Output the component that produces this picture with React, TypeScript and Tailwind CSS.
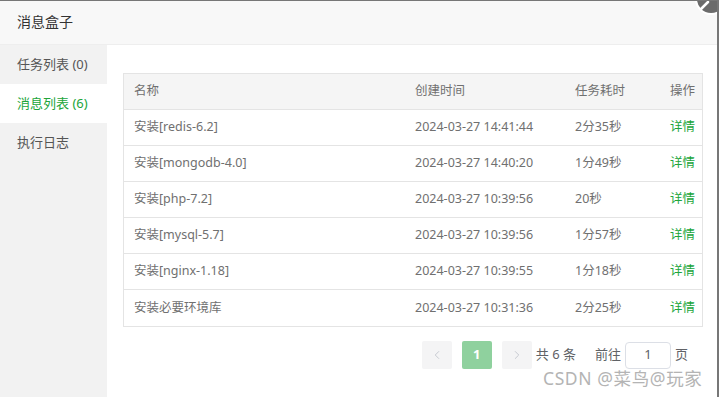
import { ChevronLeft, ChevronRight } from 'lucide-react';

const rows = [
    { name: '安装[redis-6.2]', time: '2024-03-27 14:41:44', cost: '2分35秒' },
    { name: '安装[mongodb-4.0]', time: '2024-03-27 14:40:20', cost: '1分49秒' },
    { name: '安装[php-7.2]', time: '2024-03-27 10:39:56', cost: '20秒' },
    { name: '安装[mysql-5.7]', time: '2024-03-27 10:39:56', cost: '1分57秒' },
    { name: '安装[nginx-1.18]', time: '2024-03-27 10:39:55', cost: '1分18秒' },
    { name: '安装必要环境库', time: '2024-03-27 10:31:36', cost: '2分25秒' },
];

const tabs = [
    { label: '任务列表 (0)', active: false },
    { label: '消息列表 (6)', active: true },
    { label: '执行日志', active: false },
];

const cols = 'grid grid-cols-[281px_160px_95px_1fr] items-center';

export default function App() {
    return (
        <div className="relative flex h-[397px] w-[719px] flex-col overflow-hidden border-t border-r-2 border-[#777] bg-white font-['Noto_Sans','Noto_Sans_CJK_SC',sans-serif] text-[#333]">
            <header className="h-[44px] shrink-0 border-b border-[#eee] bg-[#f8f8f8] px-[17px] text-[14px] leading-[42px]">消息盒子</header>

            <div className="flex min-h-0 flex-1">
                <nav className="w-[107px] shrink-0 bg-[#f2f2f2]">
                    {tabs.map((t) => (
                        <div
                            key={t.label}
                            className={`h-[39px] px-[17px] text-[13px] leading-[39px] ${t.active ? 'bg-white text-[#20a53a]' : 'text-[#555]'}`}
                        >
                            {t.label}
                        </div>
                    ))}
                </nav>

                <main className="flex-1 pl-[16px] pr-[14px] pt-[28px]">
                    <div className="border border-[#e4e4e4] text-[12.5px] text-[#707070]">
                        <div className={`${cols} h-[36px] border-b border-[#e4e4e4] bg-[#f5f5f5] pl-[10px]`}>
                            <span>名称</span>
                            <span>创建时间</span>
                            <span>任务耗时</span>
                            <span>操作</span>
                        </div>
                        {rows.map((r, i) => (
                            <div key={r.name} className={`${cols} h-[36px] pl-[10px] ${i < rows.length - 1 ? 'border-b border-[#e4e4e4]' : 'h-[35px]'}`}>
                                <span>{r.name}</span>
                                <span>{r.time}</span>
                                <span>{r.cost}</span>
                                <span className="text-[#20a53a]">详情</span>
                            </div>
                        ))}
                    </div>

                    <div className="mt-[14px] flex h-[28px] items-center justify-end pr-[15px] text-[13px] text-[#606266]">
                        <span className="flex h-[28px] w-[30px] items-center justify-center rounded-[2px] bg-[#f4f4f5] text-[#c0c4cc]">
                            <ChevronLeft className="h-[14px] w-[14px]" strokeWidth={1.5} />
                        </span>
                        <span className="ml-[10px] flex h-[28px] w-[30px] items-center justify-center rounded-[2px] bg-[#8fd19e] font-bold text-white">1</span>
                        <span className="ml-[10px] flex h-[28px] w-[30px] items-center justify-center rounded-[2px] bg-[#f4f4f5] text-[#c0c4cc]">
                            <ChevronRight className="h-[14px] w-[14px]" strokeWidth={1.5} />
                        </span>
                        <span className="ml-[4px]">共 6 条</span>
                        <span className="ml-[19px]">前往</span>
                        <span className="ml-[4px] flex h-[27px] w-[46px] items-center justify-center rounded-[4px] border border-[#dcdfe6] text-[#606266]">1</span>
                        <span className="ml-[4px]">页</span>
                    </div>
                </main>
            </div>

            <span className="pointer-events-none absolute left-[543px] top-[366px] text-[17.5px] leading-[22px] tracking-[0.6px] text-[#b4b4b4]">CSDN @菜鸟@玩家</span>

            <svg className="absolute -top-[1px] right-[-2px]" width="30" height="30" viewBox="0 0 30 30">
                <circle cx="22" cy="-1" r="16" fill="#fff" />
                <circle cx="22" cy="-1" r="14" fill="#6b6b6b" />
                <path d="M12 9 L19 2" stroke="#fff" strokeWidth="2.5" strokeLinecap="round" />
            </svg>
        </div>
    );
}
